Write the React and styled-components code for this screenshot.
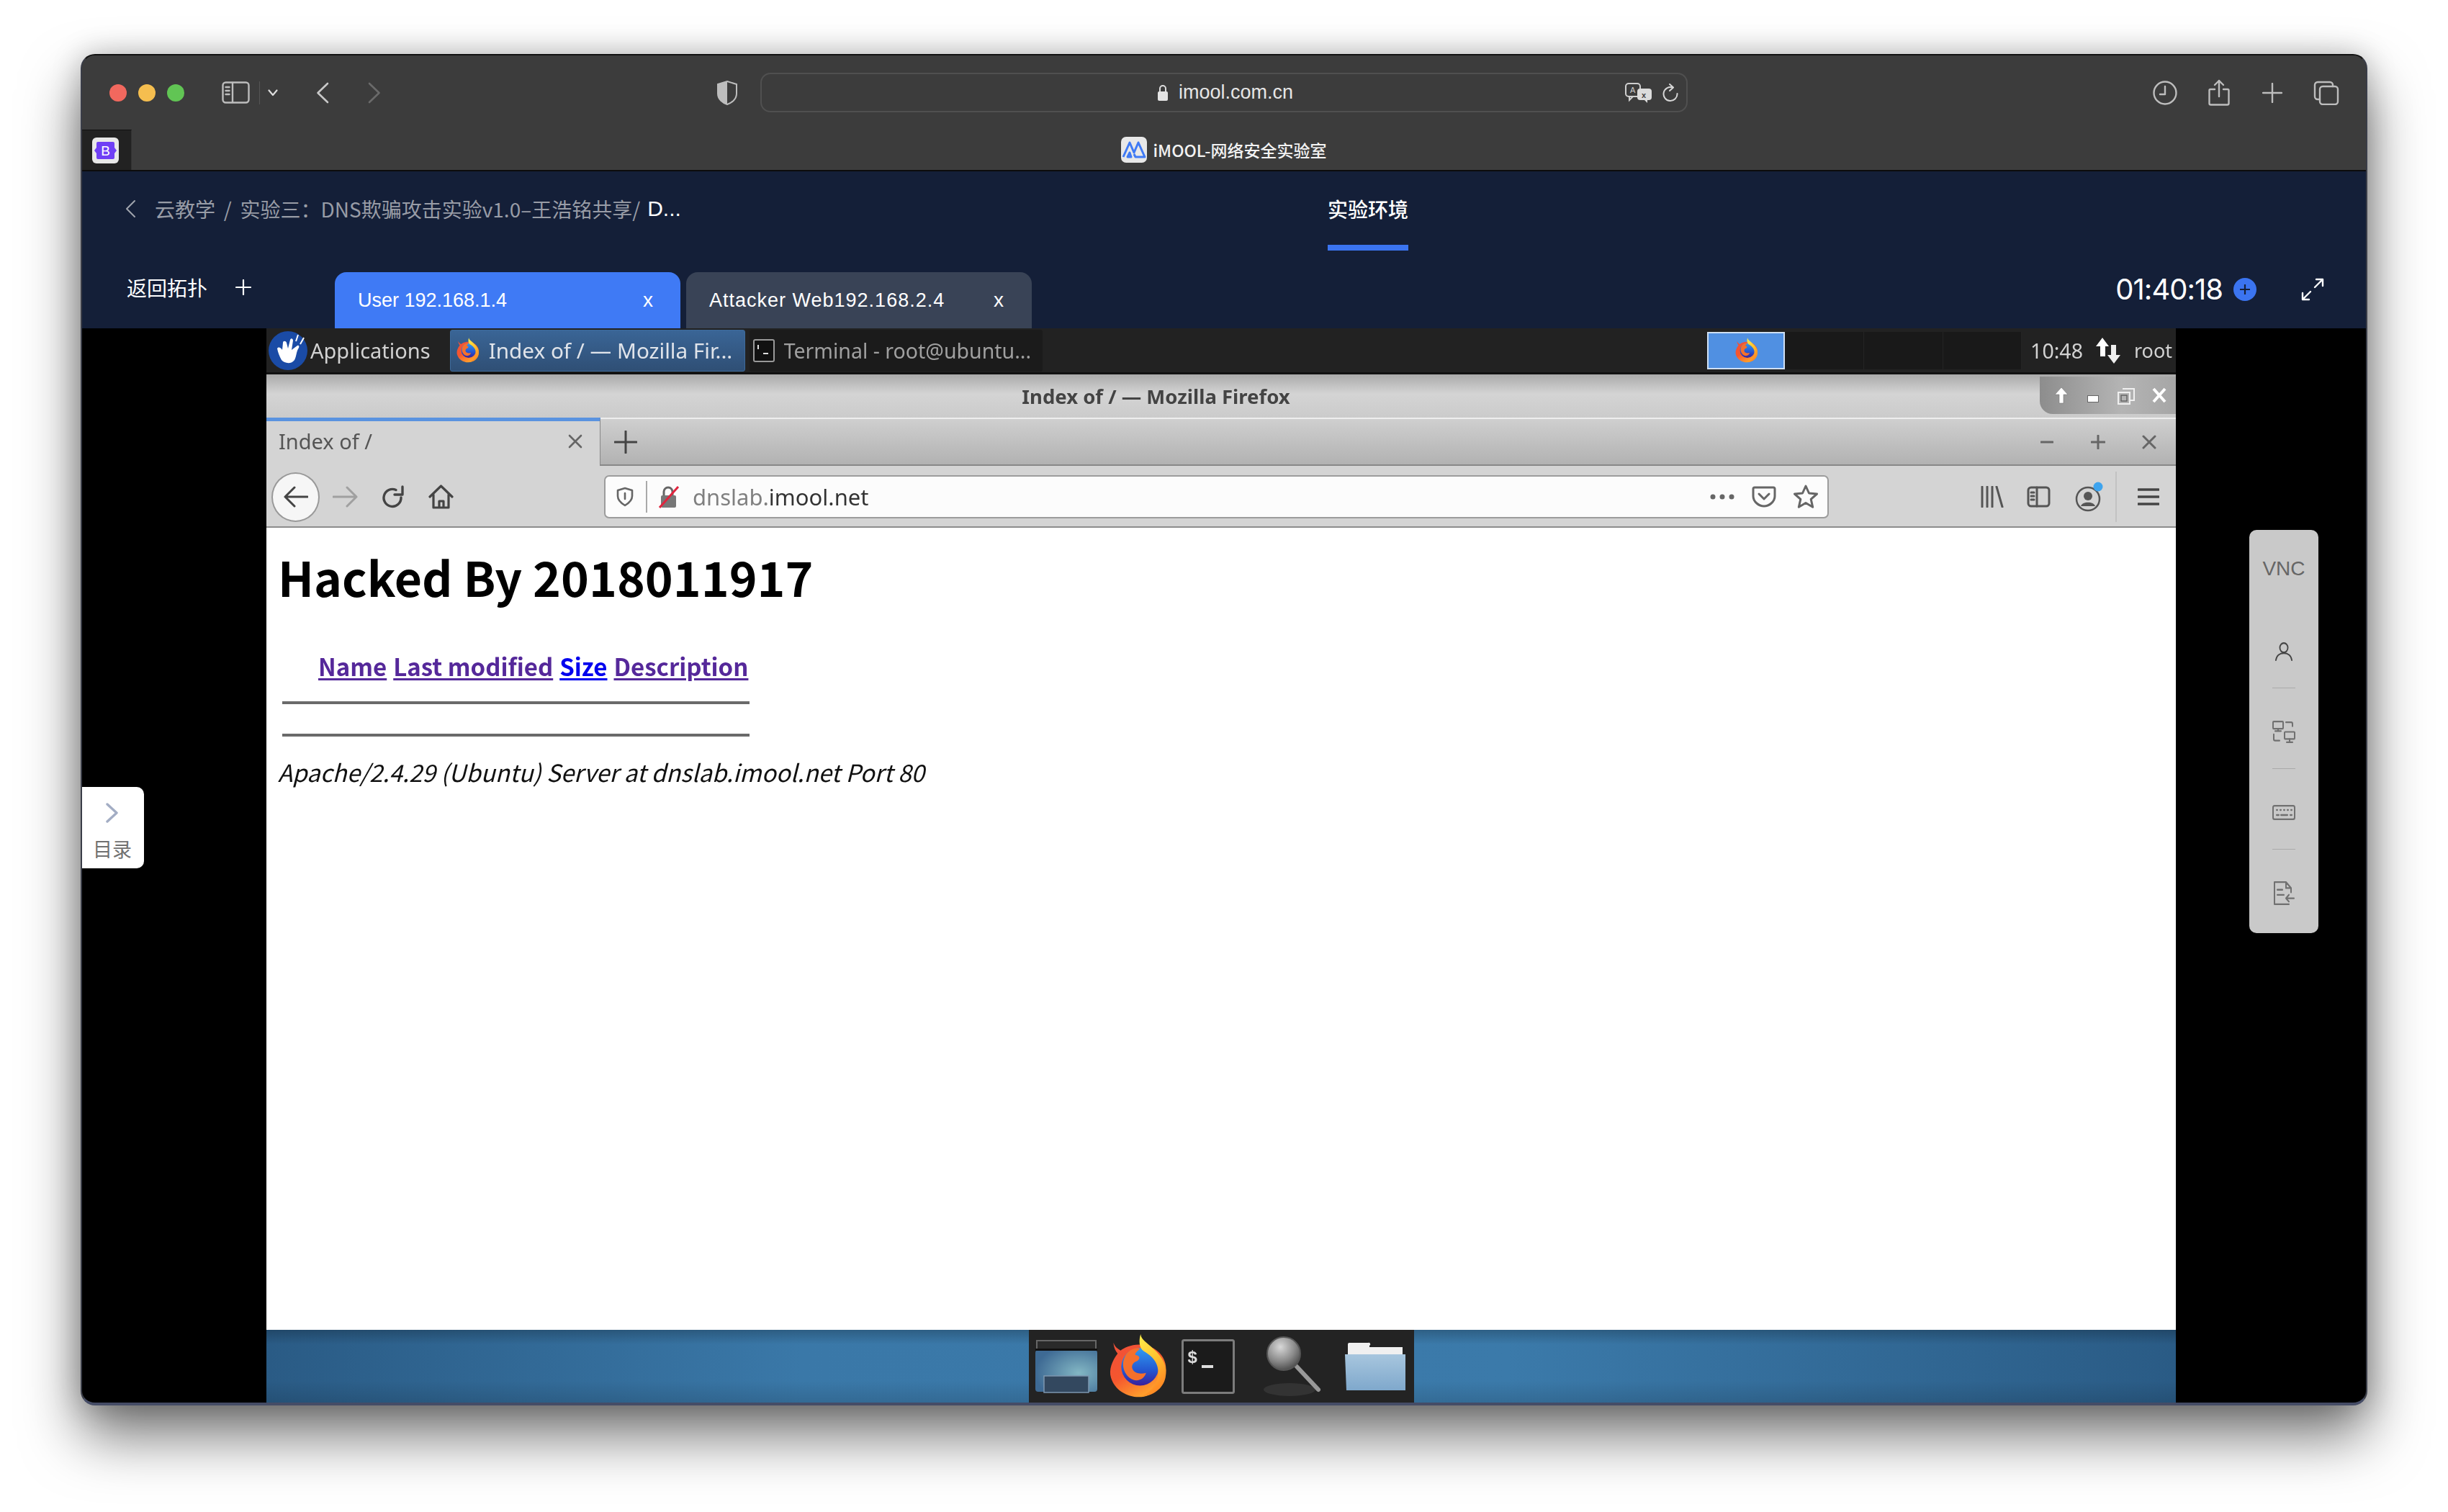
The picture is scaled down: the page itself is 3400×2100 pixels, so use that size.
import React from "react";
import styled, { createGlobalStyle } from "styled-components";

const Global = createGlobalStyle`
  html, body { margin: 0; padding: 0; background: #fff; }
  * { box-sizing: border-box; }
`;

const UI = `"Liberation Sans", "Noto Sans CJK SC", sans-serif`;
const CJK = `"Noto Sans CJK SC", "Liberation Sans", sans-serif`;
const XFCE = `"Noto Sans", "DejaVu Sans", sans-serif`;

const Page = styled.div`
  width: 3400px;
  height: 2100px;
  padding: 75px 112px 148px;
  background: #fff;
  overflow: hidden;
`;
const Win = styled.div`
  height: 1877px;
  display: flex;
  flex-direction: column;
  border-radius: 20px;
  border: 2px solid #3a3d48;
  border-top-color: #111;
  border-bottom: 4px solid #454c66;
  overflow: hidden;
  background: #3c3c3c;
  box-shadow: 0 42px 80px rgba(0, 0, 0, 0.55), 0 0 40px rgba(0, 0, 0, 0.22);
`;

/* Safari chrome */
const Toolbar = styled.div`
  height: 103px;
  display: flex;
  align-items: center;
  padding-left: 38px;
  background: #3c3c3c;
  flex: none;
`;
const Light = styled.span`
  width: 24px;
  height: 24px;
  border-radius: 50%;
  background: ${(p) => p.$c};
  margin-right: 16px;
  flex: none;
`;
const Icon = styled.svg`
  flex: none;
  display: block;
  margin-left: ${(p) => p.$ml || 0}px;
  margin-top: ${(p) => p.$mt || 0}px;
`;
const UrlBar = styled.div`
  margin-left: 32px;
  width: 1288px;
  height: 55px;
  border: 2px solid #505050;
  border-radius: 14px;
  display: flex;
  align-items: center;
  flex: none;
`;
const UrlHost = styled.span`
  font: 27px ${UI};
  color: #e6e6e6;
  margin-left: 14px;
  white-space: nowrap;
`;
const TabRow = styled.div`
  height: 58px;
  display: flex;
  background: #3c3c3c;
  border-bottom: 2px solid #0c0c0c;
  flex: none;
`;
const PinnedTab = styled.div`
  width: 69px;
  background: #222;
  border-top: 1px solid #111;
  border-right: 1px solid #333;
  display: flex;
  align-items: center;
  padding-left: 14px;
`;
const PageTitle = styled.div`
  flex: 1;
  padding-right: 69px;
  display: flex;
  justify-content: center;
  align-items: center;
  gap: 8px;
  font: 500 23px ${CJK};
  color: #f2f2f2;
`;

/* Lab header */
const LabHeader = styled.div`
  height: 218px;
  background: #141f38;
  flex: none;
  display: flex;
  flex-direction: column;
`;
const CrumbRow = styled.div`
  height: 112px;
  display: grid;
  grid-template-columns: 1730px auto 1fr;
`;
const Crumb = styled.div`
  display: flex;
  align-items: center;
  padding: 0 0 4px 59px;
  height: 108px;
  font: 28px ${CJK};
  color: #989ca6;
  white-space: nowrap;
`;
const CrumbPath = styled.span`
  margin-left: 26px;
  word-spacing: 5.500px;
`;
const CrumbLast = styled.span`
  color: #fff;
  margin-left: 10px;
  font: 500 30px ${UI};
`;
const NavTab = styled.div`
  width: 112px;
  height: 110px;
  font: 500 28px/104px ${CJK};
  color: #fff;
  white-space: nowrap;
  border-bottom: 8px solid #3b74f0;
`;
const SessionRow = styled.div`
  height: 106px;
  display: flex;
  align-items: flex-end;
  padding: 0 58px 0 62px;
`;
const BackLink = styled.div`
  display: flex;
  align-items: center;
  height: 96px;
  width: 289px;
  padding-bottom: 18px;
  font: 28px ${CJK};
  color: #fff;
`;
const SessionTab = styled.div`
  width: 480px;
  height: 78px;
  margin-right: 8px;
  padding: 0 38px 0 32px;
  display: flex;
  align-items: center;
  justify-content: space-between;
  border-radius: 16px 16px 0 0;
  background: ${(p) => (p.$on ? "#3f7af5" : "#394356")};
  color: #fff;
  font: 27px "Liberation Sans", sans-serif;
  letter-spacing: ${(p) => (p.$on ? 0 : 1)}px;
  white-space: nowrap;
`;
const TabClose = styled.span`
  font: 28px "Liberation Sans", sans-serif;
`;
const TimerBox = styled.div`
  margin-left: auto;
  height: 106px;
  display: flex;
  align-items: center;
  padding-bottom: 3px;
`;
const Timer = styled.span`
  font: 400 40px Inter, sans-serif;
  letter-spacing: -1px;
  color: #fff;
  margin-right: 15px;
`;

/* Remote desktop */
const Desktop = styled.div`
  flex: 1;
  min-height: 0;
  position: relative;
  background: #000;
  padding: 0 264px 0 256px;
`;
const Screen = styled.div`
  height: 100%;
  display: flex;
  flex-direction: column;
  filter: blur(0.5px);
`;
const Panel = styled.div`
  height: 64px;
  flex: none;
  display: flex;
  align-items: center;
  padding-left: 3px;
  background: #222;
  border-bottom: 3px solid #111;
  font: 29px ${XFCE};
  color: #d2d2d2;
  white-space: nowrap;
`;
const PanelLabel = styled.span`
  margin-left: ${(p) => p.$ml || 0}px;
  font-size: ${(p) => p.$fs || 29}px;
  color: #d2d2d2;
`;
const WinButton = styled.div`
  height: 58px;
  width: ${(p) => p.$w}px;
  margin-left: ${(p) => p.$ml}px;
  display: flex;
  align-items: center;
  padding-left: ${(p) => p.$pl}px;
  gap: 13px;
  overflow: hidden;
  border-radius: 3px;
  font-size: ${(p) => (p.$on ? 29.7 : 28.5)}px;
  background: ${(p) => (p.$on ? "linear-gradient(#3a6596,#2f4f75)" : "#1b1b1b")};
  border: 1px solid ${(p) => (p.$on ? "#3e6b9c" : "#1b1b1b")};
  color: ${(p) => (p.$on ? "#e0e4ea" : "#a0a0a0")};
`;
const Pager = styled.div`
  margin-left: auto;
  display: flex;
  height: 52px;
  background: #191919;
`;
const PagerCell = styled.div`
  width: ${(p) => p.$w}px;
  display: flex;
  align-items: center;
  justify-content: center;
  background: ${(p) => (p.$on ? "#5090e2" : "transparent")};
  border: ${(p) => (p.$on ? "2px solid #cfe0f4" : "none")};
  border-right: ${(p) => (p.$on ? "2px solid #cfe0f4" : "1px solid #242424")};
`;
const Tray = styled.div`
  display: flex;
  align-items: center;
  padding: 0 5px 0 12px;
  gap: 0;
`;
const Titlebar = styled.div`
  height: 60px;
  flex: none;
  display: flex;
  background: linear-gradient(#aaa, #d4d4d4 45%, #cbcbcb);
`;
const TitleText = styled.div`
  flex: 1;
  padding-left: 8px;
  text-align: center;
  font: 700 27.500px/61px ${XFCE};
  color: #444;
`;
const FrameButtons = styled.div`
  width: 189px;
  height: 52px;
  margin-top: 3px;
  border-radius: 0 0 0 18px;
  background: linear-gradient(90deg, #8d8d8d, #b4b4b4 60%, #a6a6a6);
  display: flex;
  align-items: center;
  padding-left: 20px;
  gap: 14px;
`;
const Strip = styled.div`
  height: 67px;
  flex: none;
  display: flex;
  align-items: center;
  border-top: 2px solid #eee;
  border-bottom: 2px solid #888;
  background: linear-gradient(#cfcfcf, #b2b2b2);
`;
const ActiveTab = styled.div`
  width: 464px;
  height: 67px;
  margin-top: -2px;
  margin-bottom: -2px;
  align-self: flex-start;
  display: flex;
  align-items: center;
  justify-content: space-between;
  padding: 0 24px 7px 17px;
  background: #d4d4d4;
  border-top: 5px solid #5a93e0;
  border-right: 1px solid #888;
  font: 29px ${XFCE};
  color: #555;
`;
const NavBar = styled.div`
  height: 86px;
  flex: none;
  display: flex;
  align-items: center;
  background: #d4d4d4;
  border-bottom: 2px solid #8c8c8c;
  padding: 2px 0 0 7px;
`;
const BackBtn = styled.div`
  width: 67px;
  height: 69px;
  flex: none;
  border-radius: 50%;
  background: #f6f6f6;
  border: 2px solid #999;
  display: flex;
  align-items: center;
  justify-content: center;
`;
const Location = styled.div`
  width: 1701px;
  height: 60px;
  margin-left: 209px;
  flex: none;
  display: flex;
  align-items: center;
  padding-left: 15px;
  background: #fcfcfc;
  border: 2px solid #9c9c9c;
  border-radius: 7px;
`;
const LocSep = styled.span`
  width: 2px;
  height: 44px;
  background: #aaa;
  margin-left: 17px;
`;
const Addr = styled.span`
  margin-left: 18px;
  font: 31px ${XFCE};
  color: #333;
`;
const AddrDim = styled.span`
  color: #808080;
`;
const NavSep = styled.span`
  width: 2px;
  height: 70px;
  background: #c2c2c2;
  margin-left: 16px;
`;
const Content = styled.div`
  flex: 1;
  min-height: 0;
  background: #fff;
  padding-left: 16px;
  font-family: "Noto Sans CJK SC", sans-serif;
`;
const H1 = styled.h1`
  margin: 24px 0 0;
  font: 700 66px/86px "Noto Sans CJK SC", sans-serif;
  color: #000;
  white-space: nowrap;
`;
const Heads = styled.div`
  margin-top: 60px;
  padding-left: 56px;
  display: flex;
  gap: 9px;
  font: 700 33px/44px "Noto Sans CJK SC", sans-serif;
`;
const HeadLink = styled.a`
  color: ${(p) => (p.$fresh ? "#0000ee" : "#55289a")};
  text-decoration: underline;
  text-underline-offset: 3px;
`;
const Rule = styled.div`
  width: 649px;
  height: 4px;
  margin: ${(p) => p.$mt}px 0 0 6px;
  background: #6a6a6a;
`;
const Address = styled.address`
  margin-top: 27px;
  font: italic 33.100px/44px "Noto Sans CJK SC", sans-serif;
  color: #111;
  white-space: nowrap;
`;
const Dock = styled.div`
  height: 101px;
  flex: none;
  display: flex;
  justify-content: center;
  background: linear-gradient(rgba(0, 0, 0, 0.22), rgba(0, 0, 0, 0) 20%, rgba(0, 0, 0, 0) 70%, rgba(0, 0, 0, 0.12)),
    linear-gradient(90deg, #2a5b85, #3a78a8 28%, #3b7aaa 65%, #2a5b85);
`;
const DockTray = styled.div`
  width: 535px;
  background: #232323;
  display: flex;
  align-items: center;
  padding-left: 8px;
`;
const TermText = styled.text`
  font: 700 24px "Liberation Mono", monospace;
  fill: #ddd;
`;

/* overlays */
const TocTab = styled.div`
  position: absolute;
  left: 0;
  top: 637px;
  width: 86px;
  height: 113px;
  border-radius: 0 10px 10px 0;
  background: #fff;
  display: flex;
  flex-direction: column;
  align-items: center;
  padding: 22px 2px 0 0;
  font: 27px ${CJK};
  color: #707070;
`;
const TocLabel = styled.span`
  margin-top: 21px;
  line-height: 30px;
`;
const VncRail = styled.div`
  position: absolute;
  right: 66px;
  top: 280px;
  width: 96px;
  height: 560px;
  border-radius: 10px;
  background: #c9c9c9;
  display: flex;
  flex-direction: column;
  align-items: center;
`;
const VncLabel = styled.div`
  height: 108px;
  display: flex;
  align-items: center;
  font: 28px "Liberation Sans", sans-serif;
  color: #666;
`;
const RailItem = styled.div`
  height: 111px;
  padding-top: 10px;
  display: flex;
  align-items: center;
  justify-content: center;
  flex: none;
`;
const RailSep = styled.div`
  width: 32px;
  height: 1px;
  background: #aaa;
  flex: none;
`;

const Stroke = ({ w, h, vb, c = "#bdbdbd", sw = 2.4, ml, mt, children }) => (
  <Icon
    $ml={ml}
    $mt={mt}
    width={w}
    height={h}
    viewBox={vb || `0 0 ${w} ${h}`}
    preserveAspectRatio={vb ? "none" : undefined}
    fill="none"
    stroke={c}
    strokeWidth={sw}
    strokeLinecap="round"
    strokeLinejoin="round"
  >
    {children}
  </Icon>
);

const Firefox = ({ s, ml }) => (
  <Icon $ml={ml} width={s} height={s * 1.05} viewBox="0 0 100 105">
    <defs>
      <linearGradient id="ffBody" x1="0" y1="0" x2="0.6" y2="1">
        <stop offset="0" stopColor="#f0503a" />
        <stop offset="0.55" stopColor="#f5562e" />
        <stop offset="1" stopColor="#ffa52c" />
      </linearGradient>
      <linearGradient id="ffFlame" x1="0" y1="0" x2="0.4" y2="1">
        <stop offset="0" stopColor="#fff04c" />
        <stop offset="0.55" stopColor="#ffc12e" />
        <stop offset="1" stopColor="#ff8a24" />
      </linearGradient>
      <linearGradient id="ffGlobe" x1="0" y1="0" x2="0" y2="1">
        <stop offset="0" stopColor="#2f9bf0" />
        <stop offset="0.6" stopColor="#2456d0" />
        <stop offset="1" stopColor="#3a1f9a" />
      </linearGradient>
    </defs>
    <path d="M10 14 C11 24 14 28 17 32 C8 44 2 58 6 72 C12 92 32 104 52 104 C76 104 96 84 97 60 C98 40 84 22 60 18 C44 15 28 22 22 27 C16 24 12 20 10 14Z" fill="url(#ffBody)" />
    <circle cx="54" cy="54" r="31" fill="url(#ffGlobe)" />
    <path d="M34 30 C40 24 48 22 54 24 C50 28 46 30 46 34 C52 36 56 38 50 44 C44 46 40 50 41 56 C44 66 56 66 64 64 C62 72 54 78 44 76 C32 72 26 60 26 50 C26 42 30 34 34 30Z" fill="#f5702c" />
    <path d="M55 0 C56 10 66 14 76 24 C92 38 100 54 96 72 C92 90 76 102 56 103 C74 94 84 82 84 62 C84 44 70 34 60 28 C52 22 52 10 55 0Z" fill="url(#ffFlame)" />
  </Icon>
);

export default function App() {
  return (
    <Page>
      <Global />
      <Win>
        <Toolbar>
          <Light $c="#f1685e" />
          <Light $c="#f5be4f" />
          <Light $c="#61c554" />
          <Stroke w={39} h={31} ml={36}>
            <rect x="1.5" y="1.5" width="36" height="28" rx="4" />
            <path d="M15 2v27M5.5 8h5M5.5 13h5M5.5 18h5" />
          </Stroke>
          <Icon $ml={13} width={1} height={32} viewBox="0 0 1 32"><rect width="1" height="32" fill="#555" /></Icon>
          <Stroke w={14} h={10} ml={11} c="#ddd" sw={2.2}>
            <path d="M1.5 1.5 7 8l5.500-6.500" />
          </Stroke>
          <Stroke w={18} h={30} ml={53} c="#c8c8c8" sw={2.6}>
            <path d="M16 2 2.500 15 16 28" />
          </Stroke>
          <Stroke w={18} h={30} ml={54} c="#6a6a6a" sw={2.6}>
            <path d="M2 2l13.500 13L2 28" />
          </Stroke>
          <Icon $ml={467} width={28} height={34} viewBox="0 0 28 34">
            <path d="M14 1 L27 5 V18 C27 26 20 31 14 33 C8 31 1 26 1 18 V5Z" fill="none" stroke="#bdbdbd" strokeWidth="2" />
            <path d="M14 1 L1 5 V18 C1 26 8 31 14 33Z" fill="#bdbdbd" />
          </Icon>
          <UrlBar>
            <Icon $ml={549} width={16} height={24} viewBox="0 0 16 24">
              <path d="M4 11V6a4 4 0 0 1 8 0v5" fill="none" stroke="#ddd" strokeWidth="2" />
              <rect x="1" y="10" width="14" height="13" rx="2" fill="#e4e4e4" />
            </Icon>
            <UrlHost>imool.com.cn</UrlHost>
            <Icon $ml={461} width={38} height={28} viewBox="0 0 38 28">
              <rect x="1" y="1" width="20" height="18" rx="4" fill="none" stroke="#cfcfcf" strokeWidth="2" />
              <path d="M6 19v5l5-5" fill="none" stroke="#cfcfcf" strokeWidth="2" />
              <rect x="17" y="8" width="20" height="16" rx="4" fill="#dcdcdc" />
              <path d="M31 24v4l-4-4z" fill="#dcdcdc" />
              <text x="7" y="14" fontSize="11" fontFamily="Liberation Sans" fill="#cfcfcf">A</text>
              <text x="23" y="21" fontSize="11" fontWeight="700" fontFamily="Liberation Sans" fill="#3c3c3c">x</text>
            </Icon>
            <Stroke w={22} h={26} ml={14} c="#d6d6d6" sw={2}>
              <path d="M14 5.500A9.500 9.500 0 1 0 20.500 14M10 1l5 4.500-5 4.500" />
            </Stroke>
          </UrlBar>
          <Stroke w={34} h={34} ml={646}>
            <circle cx="17" cy="17" r="15.500" />
            <path d="M17 8v11h-7" />
          </Stroke>
          <Stroke w={30} h={37} ml={43}>
            <path d="M9 14H3a1.500 1.500 0 0 0-1.500 1.500v18A2 2 0 0 0 3.500 35.500h23a2 2 0 0 0 2-2v-18A1.500 1.500 0 0 0 27 14h-6M15 24V2M9 8l6-6 6 6" />
          </Stroke>
          <Stroke w={28} h={28} ml={45}>
            <path d="M14 1v26M1 14h26" />
          </Stroke>
          <Stroke w={36} h={34} ml={43}>
            <rect x="9" y="8" width="25" height="25" rx="4" />
            <path d="M9 26H6a4 4 0 0 1-4-4V6a4 4 0 0 1 4-4h17a4 4 0 0 1 4 4v2" />
          </Stroke>
        </Toolbar>
        <TabRow>
          <PinnedTab>
            <Icon width={37} height={36} viewBox="0 0 37 36">
              <rect width="37" height="36" rx="6" fill="#e8e8e8" />
              <path d="M8 6h21a2 2 0 0 1 2 2v6l3 4-3 4v6a2 2 0 0 1-2 2H8a2 2 0 0 1-2-2v-6l-3-4 3-4V8a2 2 0 0 1 2-2z" fill="#6f3ff5" />
              <text x="18.500" y="25" textAnchor="middle" fontSize="19" fontFamily="Liberation Sans" fill="#fff">B</text>
            </Icon>
          </PinnedTab>
          <PageTitle>
            <Icon width={36} height={36} viewBox="0 0 36 36">
              <rect width="36" height="36" rx="7" fill="#e8e8e8" />
              <path d="M3 28 12 8l6 14 6-14 9 20H20l-2-4M14 28l-2-6-3 6z" fill="none" stroke="#3f7af5" strokeWidth="3" strokeLinejoin="round" />
            </Icon>
            iMOOL-网络安全实验室
          </PageTitle>
        </TabRow>
        <LabHeader>
          <CrumbRow>
            <Crumb>
              <Stroke w={16} h={26} c="#a0a4ad" sw={2}>
                <path d="M14 2 3 13l11 11" />
              </Stroke>
              <CrumbPath>云教学 / 实验三：DNS欺骗攻击实验v1.0–王浩铭共享/</CrumbPath>
              <CrumbLast>D...</CrumbLast>
            </Crumb>
            <NavTab>实验环境</NavTab>
          </CrumbRow>
          <SessionRow>
            <BackLink>
              返回拓扑
              <Stroke w={22} h={22} ml={39} c="#fff" sw={2.200}>
                <path d="M11 1v20M1 11h20" />
              </Stroke>
            </BackLink>
            <SessionTab $on>
              User 192.168.1.4
              <TabClose>x</TabClose>
            </SessionTab>
            <SessionTab>
              Attacker Web192.168.2.4
              <TabClose>x</TabClose>
            </SessionTab>
            <TimerBox>
              <Timer>01:40:18</Timer>
              <Icon width={32} height={32} viewBox="0 0 32 32">
                <circle cx="16" cy="16" r="16" fill="#3b74f0" />
                <path d="M16 9v14M9 16h14" stroke="#141f38" strokeWidth="2.200" />
              </Icon>
              <Stroke w={32} h={32} ml={62} c="#fff" sw={2.400}>
                <path d="M19 13 30 2M21 2h9v9M13 19 2 30M2 21v9h9" />
              </Stroke>
            </TimerBox>
          </SessionRow>
        </LabHeader>
        <Desktop>
          <Screen>
            <Panel>
              <Icon width={54} height={54} viewBox="0 0 54 54">
                <circle cx="27" cy="27" r="27" fill="#1a4ba6" />
                <path d="M12 24c2-3 5-1 7 2l1-10c0-3 4-3 5 0l2 8 3-12c1-3 4-2 4 1l-2 13 8-6c2-1 3 1 2 3-4 6-3 12-6 17-4 6-14 5-18 0-3-5-5-11-6-16z" fill="#fff" />
                <path d="M38 14 41 5M44 18 49 9" stroke="#fff" strokeWidth="2" />
              </Icon>
              <PanelLabel $ml={4}>Applications</PanelLabel>
              <WinButton $on $w={410} $ml={27} $pl={7}>
                <Firefox s={33} />
                <span>Index of / — Mozilla Fir...</span>
              </WinButton>
              <WinButton $w={407} $ml={6} $pl={4}>
                <Icon width={30} height={32} viewBox="0 0 30 32">
                  <rect x="1" y="1" width="28" height="30" rx="2" fill="#111" stroke="#999" strokeWidth="2" />
                  <path d="M7 8v6M14 20h7" stroke="#ddd" strokeWidth="2" />
                </Icon>
                <span>Terminal - root@ubuntu...</span>
              </WinButton>
              <Pager>
                <PagerCell $on $w={108}><Firefox s={33} /></PagerCell>
                <PagerCell $w={110} />
                <PagerCell $w={110} />
                <PagerCell $w={109} />
              </Pager>
              <Tray>
                <PanelLabel $fs={28.5}>10:48</PanelLabel>
                <Icon $ml={17} width={36} height={38} viewBox="0 0 36 38">
                  <path d="M10 1 19 13H14V27H7V13H1Z" fill="#fff" />
                  <path d="M26 37 17 25H22V11H29V25H35Z" fill="#eee" />
                </Icon>
                <PanelLabel $ml={18} $fs={27}>root</PanelLabel>
              </Tray>
            </Panel>
            <Titlebar>
              <TitleText>Index of / — Mozilla Firefox</TitleText>
              <FrameButtons>
                <Icon width={20} height={24} viewBox="0 0 20 24">
                  <path d="M10 1 19 11H13V23H7V11H1Z" fill="#fff" stroke="#777" strokeWidth="0.6" />
                </Icon>
                <Icon $ml={12} $mt={10} width={16} height={10} viewBox="0 0 16 10">
                  <rect x="0.500" y="0.500" width="15" height="9" fill="#fff" stroke="#666" />
                </Icon>
                <Icon $ml={12} width={24} height={26} viewBox="0 0 24 26">
                  <path d="M7 4h16v16h-5M1 9h16v16H1z" fill="none" stroke="#f0f0f0" strokeWidth="2" />
                  <rect x="5" y="13" width="8" height="8" fill="none" stroke="#666" strokeWidth="1.500" />
                </Icon>
                <Icon $ml={10} width={20} height={22} viewBox="0 0 20 22">
                  <path d="M2 2 18 20M18 2 2 20" stroke="#fff" strokeWidth="4" />
                </Icon>
              </FrameButtons>
            </Titlebar>
            <Strip>
              <ActiveTab>
                Index of /
                <Stroke w={20} h={20} c="#666" sw={2.600}>
                  <path d="M2 2 18 18M18 2 2 18" />
                </Stroke>
              </ActiveTab>
              <Stroke w={32} h={32} ml={19} c="#444" sw={3}>
                <path d="M16 1v30M1 16h30" />
              </Stroke>
              <Stroke w={18} h={4} ml={1949} c="#666" sw={3}>
                <path d="M1 2h16" />
              </Stroke>
              <Stroke w={20} h={20} ml={52} c="#666" sw={3}>
                <path d="M10 1v18M1 10h18" />
              </Stroke>
              <Stroke w={20} h={20} ml={51} c="#666" sw={3}>
                <path d="M2 2 18 18M18 2 2 18" />
              </Stroke>
            </Strip>
            <NavBar>
              <BackBtn>
                <Stroke w={34} h={30} c="#444" sw={3}>
                  <path d="M33 15H2M15 2 2 15l13 13" />
                </Stroke>
              </BackBtn>
              <Stroke w={35} h={30} ml={18} c="#a0a0a0" sw={3}>
                <path d="M1 15h32M20 2l13 13-13 13" />
              </Stroke>
              <Stroke w={32} h={32} ml={33} c="#444" sw={3.400}>
                <path d="M27 17A12 12 0 1 1 20 6.500M29 2v11H18" />
              </Stroke>
              <Stroke w={35} h={34} ml={33} c="#444" sw={3.200}>
                <path d="M2 17 17.500 2 33 17M7 14v18h21V14M15 32v-9h6v9" />
              </Stroke>
              <Location>
                <Stroke w={24} h={28} c="#666" sw={2.600}>
                  <path d="M12 2 22 5v8c0 6-5 10-10 13C7 23 2 19 2 13V5zM12 9v8" />
                </Stroke>
                <LocSep />
                <Icon $ml={15} width={30} height={32} viewBox="0 0 30 32">
                  <path d="M8 15V9a6 6 0 0 1 12 0v6" fill="none" stroke="#666" strokeWidth="3" />
                  <rect x="4" y="14" width="21" height="17" rx="2" fill="#777" />
                  <path d="M2 31 28 2" stroke="#e0243e" strokeWidth="3" />
                </Icon>
                <Addr>
                  <AddrDim>dnslab.</AddrDim>imool.net
                </Addr>
                <Icon $ml={1169} width={34} height={8} viewBox="0 0 34 8">
                  <circle cx="4" cy="4" r="3.500" fill="#666" />
                  <circle cx="17" cy="4" r="3.500" fill="#666" />
                  <circle cx="30" cy="4" r="3.500" fill="#666" />
                </Icon>
                <Stroke w={34} h={30} ml={24} c="#666" sw={3}>
                  <path d="M4 2h26a2 2 0 0 1 2 2v10c0 8-8 14-15 14S2 22 2 14V4a2 2 0 0 1 2-2zM10 11l7 7 7-7" />
                </Stroke>
                <Stroke w={34} h={34} ml={24} c="#666" sw={3}>
                  <path d="M17 2l4.500 10 11 1-8.300 7.300 2.500 11L17 25.500 7.300 31.300l2.500-11L1.500 13l11-1z" />
                </Stroke>
              </Location>
              <Stroke w={32} h={30} ml={211} c="#555" sw={3}>
                <path d="M2 1v28M9 1v28M16 1v28M22 1l8 28" />
              </Stroke>
              <Stroke w={33} h={30} ml={32} c="#555" sw={3}>
                <rect x="2" y="2" width="29" height="26" rx="4" />
                <path d="M14 2v26M6 9h4M6 14h4M6 19h4" />
              </Stroke>
              <Icon $ml={34} width={40} height={42} viewBox="0 0 40 42">
                <circle cx="18" cy="24" r="16" fill="none" stroke="#555" strokeWidth="2.500" />
                <circle cx="18" cy="20" r="6" fill="#555" />
                <path d="M8 34c2-7 18-7 20 0" fill="#555" />
                <circle cx="32" cy="7" r="6.500" fill="#3ea4ee" />
              </Icon>
              <NavSep />
              <Stroke w={30} h={26} ml={29} c="#444" sw={3.600}>
                <path d="M1 3h28M1 13h28M1 23h28" />
              </Stroke>
            </NavBar>
            <Content>
              <H1>Hacked By 2018011917</H1>
              <Heads>
                <HeadLink>Name</HeadLink>
                <HeadLink>Last modified</HeadLink>
                <HeadLink $fresh>Size</HeadLink>
                <HeadLink>Description</HeadLink>
              </Heads>
              <Rule $mt={27} />
              <Rule $mt={41} />
              <Address>Apache/2.4.29 (Ubuntu) Server at dnslab.imool.net Port 80</Address>
            </Content>
            <Dock>
              <DockTray>
                <Icon width={88} height={74} viewBox="0 0 88 74">
                  <defs>
                    <radialGradient id="deskGlow" cx="0.7" cy="0.55" r="0.7">
                      <stop offset="0" stopColor="#83b7c4" />
                      <stop offset="1" stopColor="#3e6a94" />
                    </radialGradient>
                  </defs>
                  <rect x="3" y="1" width="82" height="20" fill="#2a2a2a" stroke="#666" strokeWidth="2" />
                  <rect x="1" y="14" width="86" height="58" rx="4" fill="url(#deskGlow)" />
                  <rect x="1" y="12" width="86" height="3" fill="#111" />
                  <rect x="13" y="50" width="62" height="23" fill="#33485f" stroke="#7d97b0" strokeWidth="1.500" />
                </Icon>
                <Firefox s={84} ml={13} />
                <Icon $ml={19} width={74} height={76} viewBox="0 0 74 76">
                  <rect x="1.500" y="1.500" width="71" height="73" rx="2" fill="#1b1b1b" stroke="#7c7c7c" strokeWidth="3" />
                  <TermText x="8" y="33">$</TermText>
                  <rect x="28" y="36" width="16" height="4" fill="#ddd" />
                </Icon>
                <Icon $ml={38} width={86} height={84} viewBox="0 0 86 84">
                  <defs>
                    <radialGradient id="lens" cx="0.4" cy="0.3" r="0.8">
                      <stop offset="0" stopColor="#d8d8d8" />
                      <stop offset="0.55" stopColor="#8a8a8a" />
                      <stop offset="1" stopColor="#3c3c3c" />
                    </radialGradient>
                  </defs>
                  <ellipse cx="38" cy="74" rx="36" ry="9" fill="#333" />
                  <path d="M48 42 78 74" stroke="#999" strokeWidth="6" strokeLinecap="round" />
                  <circle cx="30" cy="24" r="23" fill="url(#lens)" stroke="#555" strokeWidth="2" />
                </Icon>
                <Icon $ml={28} width={86} height={70} viewBox="0 0 86 70">
                  <defs>
                    <linearGradient id="folderFill" x1="0" y1="0" x2="0" y2="1">
                      <stop offset="0" stopColor="#a7c6de" />
                      <stop offset="1" stopColor="#7fa8cc" />
                    </linearGradient>
                  </defs>
                  <path d="M5 16V4a2 2 0 0 1 2-2h26a2 2 0 0 1 2 4v2h46v14H5z" fill="#f0f0f0" />
                  <path d="M1 18h84v50H3z" fill="url(#folderFill)" />
                </Icon>
              </DockTray>
            </Dock>
          </Screen>
          <TocTab>
            <Stroke w={18} h={28} c="#a3adc4" sw={3.400}>
              <path d="M2 2l13 12L2 26" />
            </Stroke>
            <TocLabel>目录</TocLabel>
          </TocTab>
          <VncRail>
            <VncLabel>VNC</VncLabel>
            <RailItem>
              <Stroke w={24} h={26} vb="0 0 26 24" c="#444" sw={2}>
                <circle cx="13" cy="7" r="6" />
                <path d="M1 23c1-6 6-9 12-9s11 3 12 9" />
              </Stroke>
            </RailItem>
            <RailSep />
            <RailItem>
              <Stroke w={32} h={31} vb="0 0 32 28" c="#707070" sw={2}>
                <rect x="1" y="1" width="14" height="9" rx="1" />
                <path d="M4 13h8M8 10v3M19 2h7a2 2 0 0 1 2 2v3M2 17v6a2 2 0 0 0 2 2h6" />
                <rect x="17" y="14" width="14" height="9" rx="1" />
                <path d="M20 27h8M24 23v4" />
              </Stroke>
            </RailItem>
            <RailSep />
            <RailItem>
              <Stroke w={32} h={21} vb="0 0 32 18" c="#707070" sw={2}>
                <rect x="1" y="1" width="30" height="16" rx="2" />
                <path d="M6 6h1M11 6h1M16 6h1M21 6h1M26 6h1M6 12h3M12 12h9M25 12h2" />
              </Stroke>
            </RailItem>
            <RailSep />
            <RailItem>
              <Stroke w={30} h={33} vb="0 0 30 28" c="#707070" sw={2}>
                <path d="M25 13V8l-7-7H2v26h20M18 1v7h7M6 10h7M6 16h9M29 20H18M22 16l-4 4 4 4" />
              </Stroke>
            </RailItem>
          </VncRail>
        </Desktop>
      </Win>
    </Page>
  );
}
